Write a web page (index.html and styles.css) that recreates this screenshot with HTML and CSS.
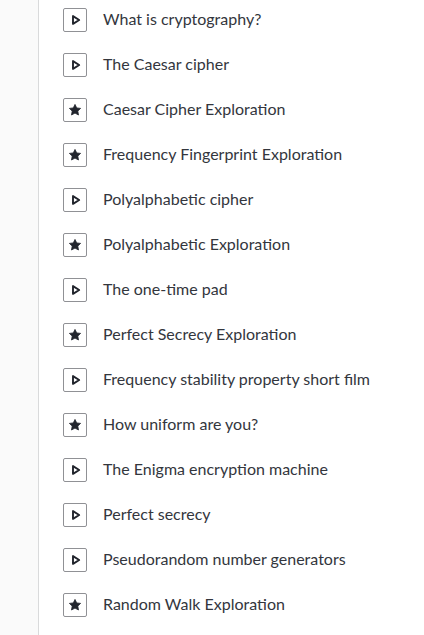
FILE: index.html
```html
<!DOCTYPE html>
<html lang="en">
<head>
  <meta charset="UTF-8">
  <meta name="viewport" content="width=device-width, initial-scale=1.0">
  <title>Cryptography</title>
  <link rel="stylesheet" href="styles.css">
</head>
<body>

  <!-- Shared icons -->
  <svg class="icon-defs" width="0" height="0">
    <symbol id="video" viewBox="0 0 22 22">
      <path d="M9 7.100v7.800l6.200-3.900z" fill="none" stroke="currentColor" stroke-width="1.900" stroke-linejoin="round"/>
    </symbol>
    <symbol id="star" viewBox="0 0 22 22">
      <path d="M11 5.400l1.700 3.500 3.900.5-2.800 2.700.7 3.900-3.500-1.900L7.500 16l.7-3.900-2.800-2.700 3.900-.5z" fill="currentColor" stroke="currentColor" stroke-width="0.800" stroke-linejoin="round"/>
    </symbol>
  </svg>

  <div class="page">
    <div class="sidebar"></div>
    <ul class="lessons">
      <li class="lesson"><svg class="icon"><use href="#video"/></svg><span class="title">What is cryptography?</span></li>
      <li class="lesson"><svg class="icon"><use href="#video"/></svg><span class="title">The Caesar cipher</span></li>
      <li class="lesson"><svg class="icon"><use href="#star"/></svg><span class="title">Caesar Cipher Exploration</span></li>
      <li class="lesson"><svg class="icon"><use href="#star"/></svg><span class="title">Frequency Fingerprint Exploration</span></li>
      <li class="lesson"><svg class="icon"><use href="#video"/></svg><span class="title">Polyalphabetic cipher</span></li>
      <li class="lesson"><svg class="icon"><use href="#star"/></svg><span class="title">Polyalphabetic Exploration</span></li>
      <li class="lesson"><svg class="icon"><use href="#video"/></svg><span class="title">The one-time pad</span></li>
      <li class="lesson"><svg class="icon"><use href="#star"/></svg><span class="title">Perfect Secrecy Exploration</span></li>
      <li class="lesson"><svg class="icon"><use href="#video"/></svg><span class="title">Frequency stability property short film</span></li>
      <li class="lesson"><svg class="icon"><use href="#star"/></svg><span class="title">How uniform are you?</span></li>
      <li class="lesson"><svg class="icon"><use href="#video"/></svg><span class="title">The Enigma encryption machine</span></li>
      <li class="lesson"><svg class="icon"><use href="#video"/></svg><span class="title">Perfect secrecy</span></li>
      <li class="lesson"><svg class="icon"><use href="#video"/></svg><span class="title">Pseudorandom number generators</span></li>
      <li class="lesson"><svg class="icon"><use href="#star"/></svg><span class="title">Random Walk Exploration</span></li>
    </ul>
  </div>

</body>
</html>
```

FILE: styles.css
```css
body {
  margin: 0;
  font-family: Lato, "Liberation Sans", sans-serif;
  font-size: 16px;
  line-height: 20px;
  color: #21242c;
  background-color: #fff;
}

.icon-defs {
  display: none;
}

.page {
  display: flex;
  height: 635px;
  overflow: hidden;
}

.sidebar {
  box-sizing: border-box;
  flex: 0 0 39px;
  background-color: #fafafa;
  border-right: 1px solid #d9dadb;
}

.lessons {
  flex: 1;
  margin: 0;
  padding: 8px 0 0 24px;
  list-style: none;
}

.lesson {
  display: flex;
  align-items: center;
  gap: 16px;
  height: 24px;
  margin-bottom: 21px;
  white-space: nowrap;
}

.title {
  padding-bottom: 2px;
  color: #33363d;
}

/* Small framed icon left of each title */
.icon {
  box-sizing: border-box;
  flex: none;
  width: 24px;
  height: 24px;
  border: 1px solid #909195;
  border-radius: 2px;
}
```
